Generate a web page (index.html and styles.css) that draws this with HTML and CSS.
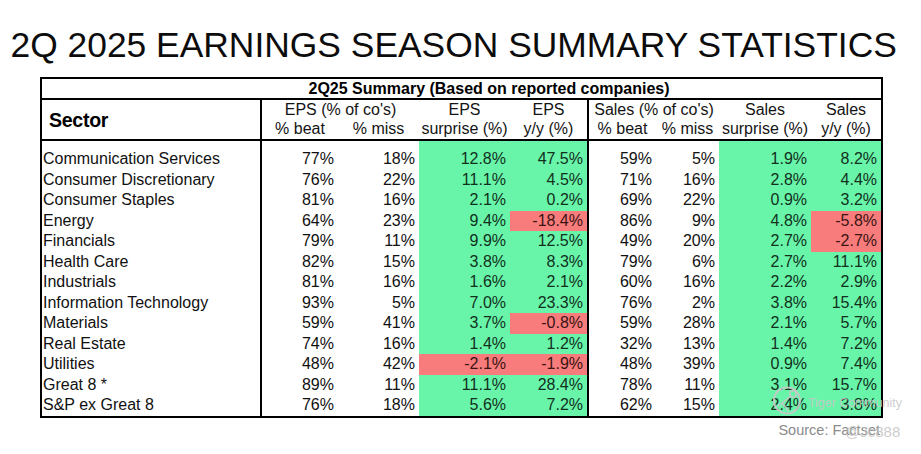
FILE: index.html
```html
<!DOCTYPE html>
<html lang="en">
<head>
<meta charset="utf-8">
<title>2Q 2025 Earnings Season Summary Statistics</title>
<link rel="stylesheet" href="styles.css">
</head>
<body>
<h1 class="title">2Q 2025 EARNINGS SEASON SUMMARY STATISTICS</h1>
<div class="wrap">
  <table class="stats">
    <colgroup>
      <col class="w-sector"><col class="w-beat"><col class="w-miss"><col class="w-surp"><col class="w-yy">
      <col class="w-sbeat"><col class="w-smiss"><col class="w-ssurp"><col class="w-syy">
    </colgroup>
    <thead>
      <tr class="summary"><th colspan="9">2Q25 Summary (Based on reported companies)</th></tr>
      <tr class="hA">
        <th class="sector-h" rowspan="2">Sector</th>
        <th colspan="2">EPS (% of co's)</th>
        <th>EPS</th>
        <th class="div">EPS</th>
        <th colspan="2">Sales (% of co's)</th>
        <th>Sales</th>
        <th>Sales</th>
      </tr>
      <tr class="hB">
        <th>% beat</th><th>% miss</th><th>surprise (%)</th><th class="div">y/y (%)</th>
        <th>% beat</th><th>% miss</th><th>surprise (%)</th><th>y/y (%)</th>
      </tr>
    </thead>
    <tbody>
      <tr class="spacer"><td></td><td></td><td></td><td></td><td></td><td></td><td></td><td></td><td></td></tr>
      <tr><td>Communication Services</td><td>77%</td><td>18%</td><td>12.8%</td><td>47.5%</td><td>59%</td><td>5%</td><td>1.9%</td><td>8.2%</td></tr>
      <tr><td>Consumer Discretionary</td><td>76%</td><td>22%</td><td>11.1%</td><td>4.5%</td><td>71%</td><td>16%</td><td>2.8%</td><td>4.4%</td></tr>
      <tr><td>Consumer Staples</td><td>81%</td><td>16%</td><td>2.1%</td><td>0.2%</td><td>69%</td><td>22%</td><td>0.9%</td><td>3.2%</td></tr>
      <tr><td>Energy</td><td>64%</td><td>23%</td><td>9.4%</td><td class="neg">-18.4%</td><td>86%</td><td>9%</td><td>4.8%</td><td class="neg">-5.8%</td></tr>
      <tr><td>Financials</td><td>79%</td><td>11%</td><td>9.9%</td><td>12.5%</td><td>49%</td><td>20%</td><td>2.7%</td><td class="neg">-2.7%</td></tr>
      <tr><td>Health Care</td><td>82%</td><td>15%</td><td>3.8%</td><td>8.3%</td><td>79%</td><td>6%</td><td>2.7%</td><td>11.1%</td></tr>
      <tr><td>Industrials</td><td>81%</td><td>16%</td><td>1.6%</td><td>2.1%</td><td>60%</td><td>16%</td><td>2.2%</td><td>2.9%</td></tr>
      <tr><td>Information Technology</td><td>93%</td><td>5%</td><td>7.0%</td><td>23.3%</td><td>76%</td><td>2%</td><td>3.8%</td><td>15.4%</td></tr>
      <tr><td>Materials</td><td>59%</td><td>41%</td><td>3.7%</td><td class="neg">-0.8%</td><td>59%</td><td>28%</td><td>2.1%</td><td>5.7%</td></tr>
      <tr><td>Real Estate</td><td>74%</td><td>16%</td><td>1.4%</td><td>1.2%</td><td>32%</td><td>13%</td><td>1.4%</td><td>7.2%</td></tr>
      <tr><td>Utilities</td><td>48%</td><td>42%</td><td class="neg">-2.1%</td><td class="neg">-1.9%</td><td>48%</td><td>39%</td><td>0.9%</td><td>7.4%</td></tr>
      <tr><td>Great 8 *</td><td>89%</td><td>11%</td><td>11.1%</td><td>28.4%</td><td>78%</td><td>11%</td><td>3.1%</td><td>15.7%</td></tr>
      <tr><td>S&amp;P ex Great 8</td><td>76%</td><td>18%</td><td>5.6%</td><td>7.2%</td><td>62%</td><td>15%</td><td>2.4%</td><td>3.8%</td></tr>
    </tbody>
  </table>
  <p class="source">Source: Factset</p>
</div>

<div class="wm-logo" aria-hidden="true">
  <svg width="32" height="30" viewBox="0 0 32 30">
    <circle cx="15" cy="14.5" r="13" fill="none" stroke="rgba(200,200,200,0.9)" stroke-width="2"/>
    <circle cx="21" cy="8" r="3.2" fill="none" stroke="rgba(200,200,200,0.9)" stroke-width="1.6"/>
    <path d="M18 10.5 C14 14 10 17 6 20 M9 17 C12 19 15 21 16 25" fill="none" stroke="rgba(200,200,200,0.9)" stroke-width="1.6"/>
  </svg>
</div>
<div class="wm-text" aria-hidden="true">Tiger Community</div>
<div class="wm-handle" aria-hidden="true">@Jc888</div>
</body>
</html>
```
FILE: styles.css
```css
* {
  box-sizing: border-box;
}

body {
  margin: 0;
  width: 921px;
  height: 454px;
  overflow: hidden;
  position: relative;
  background: #ffffff;
  color: #111111;
  font-family: "Liberation Sans", Arial, sans-serif;
}

.title {
  margin: 0;
  padding: 25px 0 0 10.5px;
  font-size: 35.4px;
  line-height: 40px;
  font-weight: normal;
  white-space: nowrap;
  color: #0c0c0c;
}

.wrap {
  margin: 12px 0 0 40px;
  width: 843px;
}

.stats {
  width: 843px;
  table-layout: fixed;
  border-collapse: separate;
  border-spacing: 0;
  border: 2px solid #000;
  font-size: 16px;
}

.w-sector { width: 220px; }
.w-beat { width: 76px; }
.w-miss { width: 81px; }
.w-surp { width: 91px; }
.w-yy { width: 79px; }
.w-sbeat { width: 67px; }
.w-smiss { width: 63px; }
.w-ssurp { width: 92px; }
.w-syy { width: 70px; }

.stats th,
.stats td {
  padding: 0;
  white-space: nowrap;
}

.stats th {
  font-weight: normal;
  text-align: center;
  color: #141414;
}

.summary th {
  font-weight: bold;
  line-height: 19px;
  padding-left: 55px;
  border-bottom: 2px solid #000;
  color: #000;
}

.hA th {
  line-height: 19px;
  vertical-align: bottom;
}

.hB th {
  line-height: 20px;
  border-bottom: 2px solid #000;
}

.stats th.sector-h {
  text-align: left;
  padding-left: 7px;
  font-weight: bold;
  font-size: 19.6px;
  line-height: 20px;
  vertical-align: middle;
  letter-spacing: -0.3px;
  border-right: 2px solid #000;
  border-bottom: 2px solid #000;
  color: #000;
}

.stats th.div {
  border-right: 2px solid #000;
}

.stats tbody td {
  line-height: 20.5px;
  text-align: right;
  padding-right: 4px;
}

.stats tbody td:nth-child(1) {
  text-align: left;
  padding-left: 1px;
  padding-right: 0;
  border-right: 2px solid #000;
}

.stats tbody td:nth-child(5) {
  border-right: 2px solid #000;
}

.stats tbody td:nth-child(4),
.stats tbody td:nth-child(5),
.stats tbody td:nth-child(8),
.stats tbody td:nth-child(9) {
  background: #68f5aa;
  color: #12301c;
}

.stats tbody td.neg {
  background: #f87c7b;
  color: #3a1414;
}

.stats tbody tr.spacer td {
  height: 8px;
  line-height: 0;
  font-size: 0;
}

.source {
  margin: 4px 0 0;
  padding-right: 3px;
  text-align: right;
  font-size: 14.5px;
  line-height: 17px;
  color: #8a8a8a;
}

.wm-logo {
  position: absolute;
  left: 772px;
  top: 386px;
  width: 32px;
  height: 30px;
}

.wm-text {
  position: absolute;
  left: 808px;
  top: 395px;
  font-size: 12.4px;
  line-height: 16px;
  color: rgba(200, 200, 200, 0.9);
  white-space: nowrap;
}

.wm-handle {
  position: absolute;
  left: 845px;
  top: 423px;
  font-size: 15px;
  line-height: 18px;
  color: rgba(190, 190, 190, 0.8);
  white-space: nowrap;
}
```
